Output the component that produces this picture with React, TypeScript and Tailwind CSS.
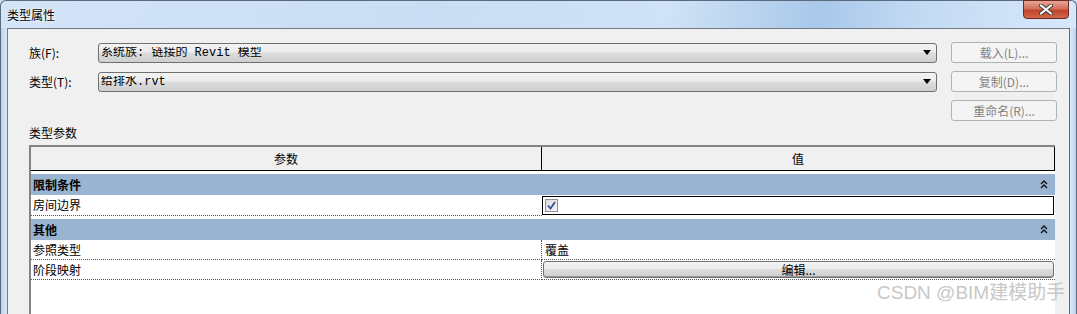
import { ReactNode } from "react";

const cjk = "font-['Noto_Sans_CJK_SC','Liberation_Sans',sans-serif]";

// little double chevron shown at the right of a group row
const Collapse = () => (
  <svg width="8" height="9" viewBox="0 0 8 9" className="block">
    <path d="M1 4 L4 1 L7 4" fill="none" stroke="#111" strokeWidth="1.4" />
    <path d="M1 8 L4 5 L7 8" fill="none" stroke="#111" strokeWidth="1.4" />
  </svg>
);

const ComboBox = ({ text }: { text: string }) => (
  <div className="flex h-[20px] w-[839px] items-center rounded-[3px] border border-[#707070] bg-[linear-gradient(to_bottom,#f3f3f3_0%,#ebebeb_45%,#dcdcdc_50%,#cfcfcf_100%)] pl-[2px] pr-[5px]">
    <span className="flex-1 truncate font-['Liberation_Mono','Noto_Sans_CJK_SC',monospace] text-[12px] leading-none text-black">
      {text}
    </span>
    <svg width="8" height="5" viewBox="0 0 8 5">
      <path d="M0 0 H8 L4 5 Z" fill="#000" />
    </svg>
  </div>
);

const SideButton = ({ children }: { children: ReactNode }) => (
  <div
    className={`flex h-[21px] w-[106px] items-center justify-center rounded-[3px] border border-[#adb2b5] bg-[#f4f4f4] text-[12px] text-[#838383] ${cjk}`}
  >
    {children}
  </div>
);

const GroupRow = ({ title }: { title: string }) => (
  <div className="mt-[3px] flex h-[21px] items-center bg-[#99b4d1] pl-[2px] pr-[7px]">
    <span className="flex-1 text-[12px] font-bold text-black">{title}</span>
    <Collapse />
  </div>
);

export default function App() {
  return (
    <div className={`relative h-[314px] w-[1077px] overflow-hidden bg-[#c9ddf3] ${cjk}`}>
      {/* title bar */}
      <div className="relative flex h-[28px] items-center rounded-t-[6px] border border-b-0 border-[#5a6b80] bg-[linear-gradient(100deg,#d3e4f7_0%,#c9ddf4_40%,#cfe2f6_62%,#a9c8ea_76%,#c4dbf4_86%,#d8e8fa_100%)] pl-[6px]">
        <span className="text-[12px] text-black [text-shadow:0_0_4px_#ffffff,0_0_2px_#ffffff]">
          类型属性
        </span>
        <div className="absolute right-[7px] top-[-1px] flex h-[19px] w-[46px] items-center justify-center rounded-b-[4px] border border-[#6e2a20] bg-[linear-gradient(to_bottom,#e6a596_0%,#d3705c_45%,#c0432c_55%,#d2664a_100%)]">
          <svg width="14" height="11" viewBox="0 0 14 11">
            <path d="M2 1.5 L12 9.5 M12 1.5 L2 9.5" stroke="#3b3b3b" strokeWidth="4" strokeLinecap="round" />
            <path d="M2 1.5 L12 9.5 M12 1.5 L2 9.5" stroke="#ffffff" strokeWidth="2.2" strokeLinecap="round" />
          </svg>
        </div>
      </div>

      {/* frame + body */}
      <div className="flex h-[286px]">
        <div className="w-[7px] border-l border-[#5a6b80] bg-[linear-gradient(to_right,#b9d3ef,#dbe9f8)]" />
        <div className="flex w-[1062px] flex-col border-l border-t border-[#6f7a86] bg-[#f0f0f0] pl-[21px] pt-[13px]">
          <div className="flex gap-[14px]">
            <div className="flex flex-col gap-[8px]">
              <div className="flex h-[21px] items-center">
                <span className="w-[69px] text-[12px] text-black">族(F):</span>
                <ComboBox text="系统族: 链接的 Revit 模型" />
              </div>
              <div className="flex h-[21px] items-center">
                <span className="w-[69px] text-[12px] text-black">类型(T):</span>
                <ComboBox text="给排水.rvt" />
              </div>
            </div>
            <div className="flex flex-col gap-[8px]">
              <SideButton>载入(L)...</SideButton>
              <SideButton>复制(D)...</SideButton>
              <SideButton>重命名(R)...</SideButton>
            </div>
          </div>

          <div className="mt-[4px] h-[16px] text-[12px] leading-[16px] text-black">类型参数</div>

          {/* parameter table */}
          <div className="mt-[4px] flex w-[1026px] flex-1 flex-col border-l-2 border-t-2 border-[#838383] bg-white text-[12px] text-black">
            <div className="flex h-[24px] bg-[#f0f0f0]">
              <div className="flex w-[511px] items-center justify-center border-b border-r border-black">参数</div>
              <div className="flex flex-1 items-center justify-center border-b border-r border-black">值</div>
            </div>

            <GroupRow title="限制条件" />
            <div className="flex h-[21px]">
              <div className="flex w-[511px] items-center border-b border-dotted border-[#555] pl-[2px]">房间边界</div>
              <div className="flex flex-1 pb-[1px] pr-[1px] pt-[1px]">
                <div className="flex flex-1 items-center border border-black pl-[2px]">
                  <div className="flex h-[13px] w-[13px] items-center justify-center border border-[#8f8f8f] bg-[linear-gradient(135deg,#dcdcdc,#f6f6f6)]">
                    <svg width="9" height="9" viewBox="0 0 9 9">
                      <path d="M1 4.5 L3.5 7.5 L8 1" fill="none" stroke="#3a4e9c" strokeWidth="1.8" />
                    </svg>
                  </div>
                </div>
              </div>
            </div>

            <GroupRow title="其他" />
            <div className="flex h-[20px]">
              <div className="flex w-[511px] items-center border-b border-r border-dotted border-[#555] pl-[2px]">参照类型</div>
              <div className="flex flex-1 items-center border-b border-dotted border-[#555] pl-[3px]">覆盖</div>
            </div>
            <div className="flex h-[20px]">
              <div className="flex w-[511px] items-center border-b border-r border-dotted border-[#555] pl-[2px]">阶段映射</div>
              <div className="flex flex-1 border-b border-dotted border-[#555] py-[1px] pl-[1px] pr-[1px]">
                <div className="flex flex-1 items-center justify-center rounded-[3px] border border-[#707070] bg-[linear-gradient(to_bottom,#f3f3f3_0%,#ebebeb_45%,#dcdcdc_50%,#cfcfcf_100%)] shadow-[inset_0_-1px_0_#9a9a9a]">
                  编辑...
                </div>
              </div>
            </div>
            <div className="flex-1" />
          </div>
        </div>
        <div className="flex-1 border-l border-r border-[#5a6b80] bg-[linear-gradient(to_right,#dbe9f8,#b9d3ef)]" />
      </div>

      {/* watermark */}
      <div className="absolute left-[877px] top-[281px] font-['Liberation_Sans','Noto_Sans_CJK_SC',sans-serif] text-[19px] leading-[24px] text-[#c8c8c8]">
        CSDN @BIM建模助手
      </div>
    </div>
  );
}
